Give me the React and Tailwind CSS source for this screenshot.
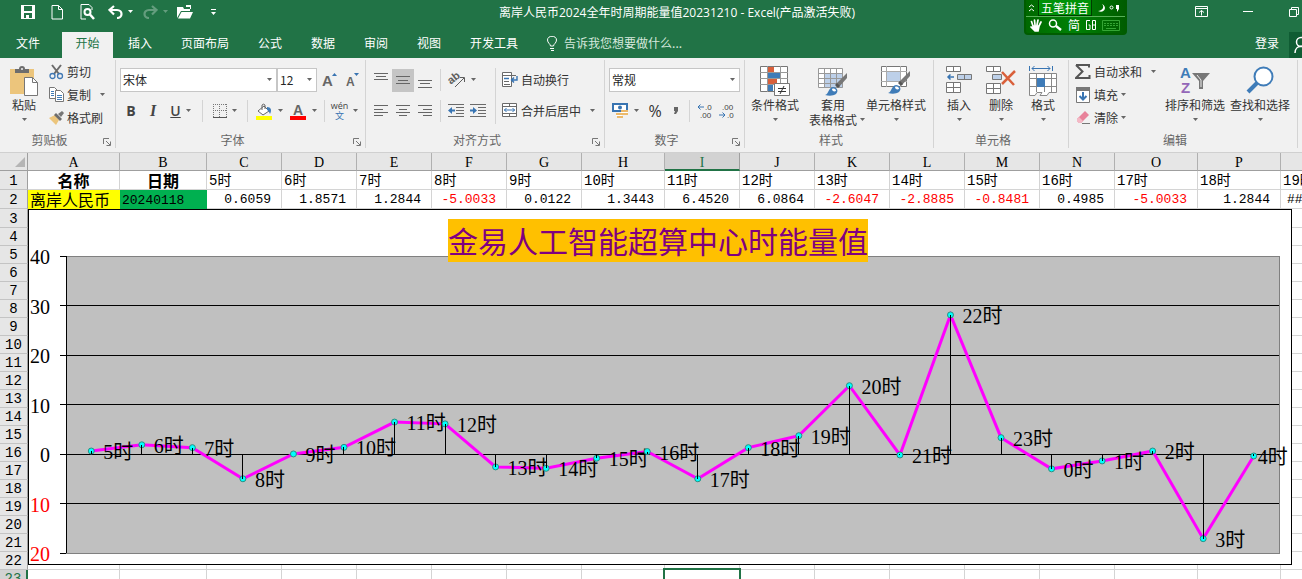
import { clsx } from "clsx";

const tabs = ["插入", "页面布局", "公式", "数据", "审阅", "视图", "开发工具"];

const columns = [
  ["A", 92], ["B", 87], ["C", 75], ["D", 75], ["E", 75], ["F", 75], ["G", 75], ["H", 83], ["I", 75],
  ["J", 75], ["K", 75], ["L", 75], ["M", 75], ["N", 75], ["O", 83], ["P", 83], ["", 75],
];

const hours = ["5时", "6时", "7时", "8时", "9时", "10时", "11时", "12时", "13时", "14时", "15时", "16时", "17时", "18时", "19时"];
const amounts = ["0.6059", "1.8571", "1.2844", "-5.0033", "0.0122", "1.3443", "6.4520", "6.0864", "-2.6047", "-2.8885", "-0.8481", "0.4985", "-5.0033", "1.2844"];

const series = [
  ["5时", 0.6059], ["6时", 1.8571], ["7时", 1.2844], ["8时", -5.0033], ["9时", 0.0122], ["10时", 1.3443],
  ["11时", 6.452], ["12时", 6.0864], ["13时", -2.6047], ["14时", -2.8885], ["15时", -0.8481], ["16时", 0.4985],
  ["17时", -5.0033], ["18时", 1.2844], ["19时", 3.7], ["20时", 13.8], ["21时", -0.2], ["22时", 28.1],
  ["23时", 3.3], ["0时", -3], ["1时", -1.4], ["2时", 0.6], ["3时", -17.1], ["4时", -0.4],
];

const emptyRows = Array.from({ length: 21 }, (_, i) => i + 3);

/* ---------- small pieces ---------- */

const Arrow = ({ className = "fill-[#666]" }) => (
  <svg width="7" height="4" viewBox="0 0 7 4" className={clsx("shrink-0", className)}><path d="M1 0h5L3.5 3z" /></svg>
);

const Sep = ({ className }) => <span className={clsx("w-px shrink-0 bg-[#d4d4d4]", className)} />;

const Launcher = () => (
  <button aria-label="更多选项" className="absolute right-1 bottom-0.5">
    <svg width="8" height="8" viewBox="0 0 8 8" fill="none" stroke="#777"><path d="M.5 6V.5H6M3 3l4 4M7.5 3.5v4h-4" /></svg>
  </button>
);

const Group = ({ title, width, launcher, children }) => (
  <section className={clsx("relative mt-0.5 mb-1 flex shrink-0 flex-col border-r border-[#d4d4d4]", width)}>
    <div className="h-[73px]">{children}</div>
    <h2 className="pr-4 text-center leading-4 text-[#666]">{title}</h2>
    {launcher && <Launcher />}
  </section>
);

const IconButton = ({ label, width, arrow, active, children }) => (
  <button aria-label={label} className={clsx("flex h-[23px] shrink-0 items-center justify-center gap-1", width, active && "bg-[#c5c5c5]")}>
    {children}
    {arrow && <Arrow />}
  </button>
);

const TextButton = ({ icon, label, arrow, gap = "gap-0.5" }) => (
  <button className="flex h-[23px] items-center gap-[3px] whitespace-nowrap">
    <span className="flex w-4 justify-center">{icon}</span>
    <span className={clsx("flex items-center", gap)}>{label}{arrow && <Arrow />}</span>
  </button>
);

const BigButton = ({ icon, label, second, width }) => (
  <button className={clsx("flex shrink-0 flex-col items-center whitespace-nowrap leading-[15px]", width)}>
    <span className="flex h-[37px] items-start pt-1.5">{icon}</span>
    <span>{label}</span>
    <span className="relative flex h-[15px] items-center">
      {second}
      {second ? <span className="absolute left-full pl-0.5"><Arrow /></span> : <Arrow />}
    </span>
  </button>
);

const Dropdown = ({ label, value, width }) => (
  <span className={clsx("relative flex shrink-0 items-center", width)}>
    <select aria-label={label} defaultValue={value} className="h-6 w-full appearance-none border border-[#c6c6c6] bg-white pl-0.5 text-[#262626]">
      <option>{value}</option>
    </select>
    <span className="pointer-events-none absolute right-1 flex"><Arrow /></span>
  </span>
);

const Lines = ({ d }) => (
  <svg width="14" height="16" viewBox="0 0 14 16" stroke="#666"><path d={d} /></svg>
);

/* ---------- ribbon icons ---------- */

const PasteIcon = () => (
  <svg width="28" height="30" viewBox="0 0 28 30">
    <path d="M0 3h24v25H0z" fill="#ecc57c" />
    <path d="M5 7V3h4a3 3 0 0 1 6 0h4v4z" fill="#6d6d6d" />
    <circle cx="12" cy="3" r="1" fill="#f1f1f1" />
    <path d="M14.5 11.5h8l5 5v13h-13z" fill="#fff" stroke="#777" />
    <path d="M22.500 11.500v5h5" fill="none" stroke="#777" />
  </svg>
);

const CutIcon = () => (
  <svg width="15" height="16" viewBox="0 0 15 16" fill="none">
    <path d="M3 1l7 9M12 1l-7 9" stroke="#6b6b6b" strokeWidth="2" />
    <circle cx="3.500" cy="12" r="2.500" stroke="#4078b4" strokeWidth="1.300" />
    <circle cx="11" cy="12" r="2.500" stroke="#4078b4" strokeWidth="1.300" />
  </svg>
);

const CopyIcon = () => (
  <svg width="15" height="15" viewBox="0 0 15 15" fill="#fff" stroke="#777">
    <path d="M.5.500h5l3 3v8h-8z" />
    <path d="M6.500 3.500h5l3 3v8h-8z" />
    <path d="M2 4.500h3M2 6.500h3M2 8.500h3M8 8.500h5M8 10.500h5M8 12.500h5" stroke="#3f7cb8" />
  </svg>
);

const PainterIcon = () => (
  <svg width="15" height="14" viewBox="0 0 15 14">
    <path d="M0 7l6-3 4 5-3 5z" fill="#ecc57c" />
    <path d="M5 4l2-2 6 6-2 2z" fill="#6d6d6d" />
    <path d="M9 3l4-3 2 2-3 4z" fill="#777" />
  </svg>
);

const FillIcon = () => (
  <svg width="17" height="17" viewBox="0 0 17 17">
    <path d="M2 8l6-5 5 5-6 4z" fill="#fff" stroke="#666" />
    <path d="M6 7V2a2 2 0 0 1 3 0v4" fill="none" stroke="#666" />
    <path d="M11 4c4 0 5 3 3 7-1-2-1-3-3-4z" fill="#3f7cb8" />
    <path d="M0 13h16v4H0z" fill="#ffff00" />
  </svg>
);

const BorderIcon = () => (
  <svg width="14" height="14" viewBox="0 0 14 14" stroke="#777">
    <path d="M.5 0v13M6.500 0v13M13.500 0v13M0 .5h14M0 6.500h14" strokeDasharray="1 1" />
    <path d="M0 13.500h14" stroke="#555" />
  </svg>
);

const AngleIcon = () => (
  <svg width="17" height="16" viewBox="0 0 17 16" className="overflow-visible">
    <text x="0" y="10" fontSize="11" fontWeight="700" fill="#5d5d5d" transform="rotate(-38 5 9)" fontFamily="Liberation Sans">ab</text>
    <path d="M6 15l9-9M11 5.500h4.500V10" fill="none" stroke="#5d5d5d" />
  </svg>
);

const IndentIcon = ({ right }) => (
  <svg width="16" height="14" viewBox="0 0 16 14">
    <path d="M0 .500h16M8 3.500h8M8 6.500h8M8 9.500h8M0 12.500h16" stroke="#6a6a6a" />
    <path d={right ? "M0 5.500h3V3l4 3.500L3 10V7.500H0z" : "M7 5.500H4V3L0 6.500 4 10V7.500h3z"} fill="#3874b2" />
  </svg>
);

const WrapIcon = () => (
  <svg width="16" height="16" viewBox="0 0 16 16" fill="none">
    <path d="M.500.500h9v14h-9z" fill="#fff" stroke="#6a6a6a" />
    <path d="M0 3.500h14M2 9.500h5M2 12.500h6" stroke="#6a6a6a" />
    <path d="M2 6.500h5M15 4v4h-5M12 5.500L9.500 8l2.500 2.500" stroke="#3874b2" strokeWidth="1.400" />
  </svg>
);

const MergeIcon = () => (
  <svg width="16" height="15" viewBox="0 0 16 15" fill="none">
    <path d="M.500.500h14v13h-14zM.5 3.500h14M.5 10.500h14M7.500.500v3M7.500 10.500v3" fill="#fff" stroke="#6a6a6a" />
    <path d="M2 7h11M4.500 5L2.500 7l2 2M10.500 5l2 2-2 2" stroke="#3874b2" />
  </svg>
);

const MoneyIcon = () => (
  <svg width="17" height="16" viewBox="0 0 17 16">
    <path d="M1 1h14v7H1z" fill="#fff" stroke="#3874b2" strokeWidth="2" />
    <circle cx="8" cy="4.500" r="2" fill="#3874b2" />
    <path d="M9 7h7v2H9zM10 10h6v2h-6zM4 10h6v2H4zM5 13h6v2H5z" fill="#ecb96a" />
    <path d="M9 9h7v1H9zM4 12h6v1H4z" fill="#fff" />
  </svg>
);

const DecimalIcon = ({ more }) => (
  <svg width="16" height="16" viewBox="0 0 16 16" fontSize="8" fontFamily="Liberation Sans" fill="#444">
    <text x={more ? 8 : 3} y="7">{more ? ".0" : ".00"}</text>
    <text x={more ? 3 : 8} y="15">{more ? ".00" : ".0"}</text>
    <path d={more ? "M7 4H1M3.500 1.500L1 4l2.500 2.500" : "M0 12h6M3.500 9.500L6 12l-2.500 2.500"} fill="none" stroke="#3874b2" />
  </svg>
);

const CondIcon = () => (
  <svg width="30" height="30" viewBox="0 0 30 30">
    <path d="M.500.500h27v25H.500z" fill="#fff" stroke="#777" />
    <path d="M8 1h6v5H8zM8 13h9v5H8z" fill="#d9603b" />
    <path d="M8 7h12v5H8zM8 19h5v6H8z" fill="#3f7cb8" />
    <path d="M0 6.500h28M0 12.500h28M0 18.500h28M7.500 0v26M20.500 0v26" stroke="#999" />
    <path d="M14.500 17.500h15v12h-15z" fill="#fff" stroke="#777" />
    <path d="M18 22.500h8M18 25.500h8M24 20l-4 8" stroke="#333" />
  </svg>
);

const BrushOver = () => (
  <>
    <path d="M29 5v5l-8 9-3-3z" fill="#777" />
    <path d="M19 15l3 3-2 2-3-3z" fill="#555" />
    <path d="M7 27c4-1 3-7 8-8 4 0 6 4 3 7-3 2-7 2-11 1z" fill="#3f7cb8" />
    <path d="M14 21c2-1 4 0 4 2-2 1-4 0-4-2z" fill="#fff" />
  </>
);

const TableStyleIcon = () => (
  <svg width="30" height="30" viewBox="0 -2 30 30">
    <path d="M.500.500h24v19H.500z" fill="#fff" />
    <path d="M7 5h18v15H7z" fill="#bdd0e9" />
    <path d="M.500.500h24v19H.500zM0 5.500h25M0 10.500h25M0 15.500h25M6.500 0v20M12.500 0v20M18.500 0v20" fill="none" stroke="#999" />
    <BrushOver />
  </svg>
);

const CellStyleIcon = () => (
  <svg width="30" height="29" viewBox="0 0 30 29">
    <path d="M.500.500h25v20H.500z" fill="#fff" stroke="#777" />
    <path d="M0 5.500h26M0 15.500h26M5.500 0v21M19.500 0v21" stroke="#aaa" />
    <path d="M6 6h13v9H6z" fill="#bdd0e9" />
    <BrushOver />
  </svg>
);

const InsertIcon = () => (
  <svg width="27" height="28" viewBox="0 0 27 28" fill="#fff" stroke="#777">
    <path d="M.500.500h14v5H.500zM7.500.500v5M.500 16.500h14v10H.500zM7.500 16.500v10M.5 21.500h14" />
    <path d="M11.500 8.500h14v5h-14zM18.500 8.500v5" fill="#bdd0e9" />
    <path d="M8 11H2M4.500 8.500L2 11l2.500 2.500" fill="none" stroke="#3874b2" strokeWidth="1.500" />
  </svg>
);

const DeleteIcon = () => (
  <svg width="30" height="28" viewBox="0 0 30 28" fill="#fff" stroke="#777">
    <path d="M.500.500h14v5H.500zM7.500.500v5M.500 17.500h14v10H.500zM7.500 17.500v10M.5 22.500h14" />
    <path d="M6.500 8.500h9v5h-9z" fill="#bdd0e9" />
    <path d="M16 6l12 13M29 5L16 18" fill="none" stroke="#d9603b" strokeWidth="2.500" />
  </svg>
);

const FormatIcon = () => (
  <svg width="28" height="31" viewBox="0 0 28 31" fill="#fff" stroke="#888">
    <path d="M.500 7.500h27v19H20l-2 3h-7l2-3H8l-2 3H.500zM7.500 7v19M15.500 7v19M22.500 7v19M.5 12.500h27M.5 20.500h27" />
    <path d="M8 12h8v9H8z" fill="#3f7cb8" stroke="none" />
    <path d="M.500 0v5M23.500 0v5M3 2.500h18M5.500 0L3 2.500 5.500 5M18.500 0L21 2.500 18.500 5" fill="none" stroke="#3874b2" />
  </svg>
);

const SigmaIcon = () => (
  <svg width="16" height="15" viewBox="0 0 16 15"><path d="M1 1h13v2.500M1 1l6.500 6.500L1 14h13.500v-3" fill="none" stroke="#555" strokeWidth="2" /></svg>
);

const DownIcon = () => (
  <svg width="14" height="16" viewBox="0 0 14 16">
    <path d="M.500.500h13v15H.500z" fill="#fff" stroke="#777" />
    <path d="M0 0h14v4H0z" fill="#777" />
    <path d="M7 5v7M3.500 9L7 12.500 10.500 9" fill="none" stroke="#3874b2" strokeWidth="2" />
  </svg>
);

const EraserIcon = () => (
  <svg width="15" height="14" viewBox="0 0 15 14">
    <path d="M1 8l8-8 4 4-8 8H3L1 10z" fill="#e8829a" />
    <path d="M3 6l4 4-2 2H3L1 10V8z" fill="#f4b9c6" />
    <path d="M6 12.500h8" stroke="#777" />
  </svg>
);

const SortIcon = () => (
  <svg width="30" height="29" viewBox="0 0 30 29" className="overflow-visible">
    <text x="0" y="12" fontSize="15" fontWeight="700" fill="#3f7cb8" fontFamily="Liberation Sans">A</text>
    <text x="1" y="27" fontSize="15" fontWeight="700" fill="#9467b8" fontFamily="Liberation Sans">Z</text>
    <path d="M12 7h18l-7 8v8h-4v-8z" fill="#777" />
    <path d="M17 9l4 5v7" fill="none" stroke="#eee" />
  </svg>
);

const FindIcon = () => (
  <svg width="28" height="28" viewBox="0 0 28 28" fill="none">
    <circle cx="17.500" cy="10.500" r="9" fill="#fff" stroke="#3f7cb8" strokeWidth="2" />
    <path d="M11 17l-9 9" stroke="#3f7cb8" strokeWidth="4" />
  </svg>
);

/* ---------- title bar ---------- */

const QuickAccess = () => (
  <div className="flex w-[499px] shrink-0 items-center pl-[21px] text-white">
    <button aria-label="保存" className="w-[30px]">
      <svg width="14" height="14" viewBox="0 0 14 14"><path d="M0 0h14v14H0z" fill="#fff" /><path d="M3 1h8v5H3zM3 8h8v5H8v-3H5v3H3z" fill="#217346" /></svg>
    </button>
    <button aria-label="新建" className="w-[29px]">
      <svg width="12" height="15" viewBox="0 0 12 15" fill="none" stroke="#fff"><path d="M1 .500h6.500l4 4v9.500H1zM7.500.500v4h4" /></svg>
    </button>
    <button aria-label="打印预览" className="w-7">
      <svg width="15" height="16" viewBox="0 0 15 16" fill="none" stroke="#fff"><path d="M6 15H1V.500h8l3 3V6" /><circle cx="7.500" cy="8" r="3" strokeWidth="2" /><path d="M10 10.500l4 4.500" strokeWidth="2.500" /></svg>
    </button>
    <button aria-label="撤消" className="flex w-[35px] items-center gap-1">
      <svg width="15" height="14" viewBox="0 0 15 14" fill="none" stroke="#fff" strokeWidth="2.200"><path d="M6 1L1.500 5 6 9.500M2 5h7c6 0 6 8 0 8" /></svg>
      <Arrow className="fill-white" />
    </button>
    <button aria-label="恢复" className="flex w-[34px] items-center gap-1 opacity-30">
      <svg width="15" height="14" viewBox="0 0 15 14" fill="none" stroke="#fff" strokeWidth="2.200"><path d="M9 1l4.500 4L9 9.500M13 5H6c-6 0-6 8 0 8" /></svg>
      <Arrow className="fill-white" />
    </button>
    <button aria-label="打开" className="w-[34px]">
      <svg width="16" height="14" viewBox="0 0 16 14" fill="#fff"><path d="M0 13V2h6l1 2h6v2H4zM4.500 7H16l-3 6.500H1zM9 0h5v4h-1V2H9z" /></svg>
    </button>
    <button aria-label="自定义快速访问工具栏">
      <svg width="5" height="8" viewBox="0 0 5 8" fill="#fff"><path d="M0 1h5v1H0zM0 4h5L2.500 7z" /></svg>
    </button>
  </div>
);

const ImeBar = () => (
  <div className="absolute top-0 right-[175px] flex h-[35px] w-[103px] flex-col rounded-b border-x-2 border-b-2 border-[#005c00] bg-linear-to-r from-[#006800] via-[#008206] to-[#005c00] text-white">
    <div className="flex h-[17px] items-center border-b border-[#58b058]">
      <svg width="12" height="10" viewBox="0 0 12 10" fill="none" stroke="#fff"><path d="M3 4l2.500-2L8 4M3 8l2.500-2L8 8" /></svg>
      <button className="h-4 w-[54px] border-x border-b border-[#003c00] bg-[#009208] leading-[14px]">五笔拼音</button>
      <svg width="30" height="12" viewBox="0 0 30 12" fill="#fff"><path d="M10 2c3 3 0 7-4 7 6 3 10-4 4-7z" /><circle cx="19.500" cy="5.500" r="1.500" fill="none" stroke="#fff" /><path d="M24 3h3v4l-2 3v-3h-1z" /></svg>
    </div>
    <div className="flex flex-1 items-center gap-1.5 pl-1">
      <svg width="12" height="13" viewBox="0 0 12 13" stroke="#fff" strokeWidth="1.700" fill="#fff" strokeLinecap="round"><path d="M3 7L1.500 2.500M5 6L4.500 1M7 6l1-5M9 7l2-4M3 7h6l-1 5H5L1 8" /></svg>
      <svg width="14" height="12" viewBox="0 0 14 12" fill="none" stroke="#fff"><circle cx="5" cy="4.500" r="3.500" strokeWidth="1.500" /><path d="M8 7l5 4" strokeWidth="2.500" /></svg>
      <span className="leading-4">简</span>
      <svg width="10" height="12" viewBox="0 0 10 12" fill="none" stroke="#fff"><path d="M4 1.500H.5v9H4V6H2.500M6.500 1.500h3v9h-3zM6.500 6h3" /></svg>
      <svg width="18" height="11" viewBox="0 0 18 11" stroke="#35a535" fill="none"><path d="M.500.500h17v10H.500z" /><path d="M2 3.500h14M2 5.500h14" strokeDasharray="2 1" /><path d="M4 8.500h10" /></svg>
    </div>
  </div>
);

const TitleBar = () => (
  <header className="relative bg-[#217346] text-white">
    <div className="flex h-8 items-start">
      <div className="flex h-6 flex-1 items-center">
        <QuickAccess />
        <h1 className="pt-0.5 font-['Open_Sans','Noto_Sans_CJK_SC',sans-serif] whitespace-nowrap">离岸人民币2024全年时周期能量值20231210 - Excel(产品激活失败)</h1>
      </div>
      <div className="flex h-6 items-center">
        <button aria-label="功能区显示选项" className="w-12"><svg width="13" height="12" viewBox="0 0 13 12" fill="none" stroke="#fff"><path d="M.500.500h12v10H.500zM.500 2.500h12M6.500 9.500v-5M4 6.500l2.500-2L9 6.500" /></svg></button>
        <button aria-label="最小化" className="w-[46px]"><svg width="11" height="2"><path d="M0 0h10v1H0z" fill="#fff" /></svg></button>
        <button aria-label="还原" className="w-[13px]"><svg width="10" height="10" viewBox="0 0 10 10" fill="none" stroke="#fff"><path d="M.500 2.500h7v7h-7zM2.500 2.500v-2h7v7h-2" /></svg></button>
      </div>
    </div>
    <nav className="flex h-[26px] leading-[22px]">
      <button className="w-[62px] pr-1.5 pb-1">文件</button>
      <button className="w-[51px] bg-[#f1f1f1] pb-1 text-[#217346]">开始</button>
      <div className="flex gap-[29px] pb-1 pl-[15px]">
        {tabs.map((tab) => <button key={tab}>{tab}</button>)}
        <label className="flex items-center gap-1.5 text-[#d6e8dd]">
          <svg width="11" height="15" viewBox="0 0 11 15" fill="none" stroke="#fff"><path d="M3.500 10c0-2-3-3-3-6 0-5 9-5 9 0 0 3-3 4-3 6zM3 12.500h4M4 14.500h3" /></svg>
          <input placeholder="告诉我您想要做什么..." className="w-36 outline-none placeholder:text-[#d6e8dd]" />
        </label>
      </div>
      <button className="ml-auto w-11 pb-1">登录</button>
      <button aria-label="共享" className="w-[13px] overflow-hidden bg-[#0f5c33]">
        <svg width="20" height="18" viewBox="0 0 20 18" fill="none" stroke="#fff" strokeWidth="1.500"><circle cx="12" cy="6" r="4.500" /><path d="M6 17c0-9 12-9 12 0" /></svg>
      </button>
    </nav>
    <ImeBar />
  </header>
);

/* ---------- ribbon ---------- */

const Ribbon = () => (
  <div className="flex h-[95px] overflow-hidden border-b border-[#d0d0d0] bg-[#f1f1f1] text-[#333]">
    <Group title="剪贴板" width="w-[116px]" launcher>
      <div className="flex">
        <BigButton icon={<PasteIcon />} label="粘贴" width="w-12" />
        <div className="flex flex-col">
          <TextButton icon={<CutIcon />} label="剪切" />
          <TextButton icon={<CopyIcon />} label="复制" arrow gap="gap-2" />
          <TextButton icon={<PainterIcon />} label="格式刷" />
        </div>
      </div>
    </Group>

    <Group title="字体" width="w-[250px]" launcher>
      <div className="flex flex-col gap-[7px] pt-2 pl-1">
        <div className="flex h-6 items-center">
          <Dropdown label="字体" value="宋体" width="w-[157px]" />
          <Dropdown label="字号" value="12" width="w-10" />
          <IconButton label="增大字号" width="w-[26px]">
            <svg width="16" height="16" viewBox="0 0 16 16"><text x="0" y="14" fontSize="15" fontFamily="Liberation Sans" fontWeight="700" fill="#666">A</text><path d="M10 4h5l-2.500-3z" fill="#3874b2" /></svg>
          </IconButton>
          <IconButton label="减小字号" width="w-5">
            <svg width="14" height="16" viewBox="0 0 14 16"><text x="0" y="14" fontSize="12" fontFamily="Liberation Sans" fontWeight="700" fill="#666">A</text><path d="M8 1h5l-2.500 3z" fill="#3874b2" /></svg>
          </IconButton>
        </div>
        <div className="flex h-6 items-center font-['Open_Sans',sans-serif] text-sm text-[#444]">
          <IconButton label="加粗" width="w-[22px]"><b>B</b></IconButton>
          <IconButton label="倾斜" width="w-[22px]"><i className="font-['Liberation_Serif',serif] text-base font-bold">I</i></IconButton>
          <IconButton label="下划线" width="w-[34px]" arrow><u className="font-semibold">U</u></IconButton>
          <Sep className="mx-1 h-[22px]" />
          <IconButton label="边框" width="w-9" arrow><BorderIcon /></IconButton>
          <Sep className="mx-1 h-[22px]" />
          <IconButton label="填充颜色" width="w-9" arrow><FillIcon /></IconButton>
          <IconButton label="字体颜色" width="w-8" arrow>
            <svg width="17" height="17" viewBox="0 0 17 17"><text x="3" y="12" fontSize="14" fontWeight="700" fill="#666" fontFamily="Liberation Sans">A</text><path d="M0 13h16v4H0z" fill="#f00" /></svg>
          </IconButton>
          <Sep className="ml-1 h-[22px]" />
          <IconButton label="拼音" width="w-10" arrow>
            <span className="flex flex-col items-center text-[9px] leading-[10px]"><span>wén</span><span className="font-['Noto_Sans_CJK_SC',sans-serif] text-[#3874b2]">文</span></span>
          </IconButton>
        </div>
      </div>
    </Group>

    <Group title="对齐方式" width="w-[239px]" launcher>
      <div className="flex gap-1.5 pt-2 pl-1">
        <div className="flex flex-col gap-[7px]">
          <div className="flex h-6 items-center">
            <IconButton label="顶端对齐" width="w-[22px]"><Lines d="M0 1.500h14M2 4.500h10M0 7.500h14" /></IconButton>
            <IconButton label="垂直居中" width="w-[22px]" active><Lines d="M0 4.500h14M2 8.500h10M0 11.500h14" /></IconButton>
            <IconButton label="底端对齐" width="w-[22px]"><Lines d="M0 8.500h14M2 11.500h10M0 15.500h14" /></IconButton>
            <Sep className="mx-1 h-[22px]" />
            <IconButton label="方向" width="w-9" arrow><AngleIcon /></IconButton>
          </div>
          <div className="flex h-6 items-center">
            <IconButton label="左对齐" width="w-[22px]"><Lines d="M0 2.500h14M0 6.500h9M0 9.500h14M0 12.500h9" /></IconButton>
            <IconButton label="居中" width="w-[22px]"><Lines d="M0 2.500h14M3 6.500h8M0 9.500h14M3 12.500h8" /></IconButton>
            <IconButton label="右对齐" width="w-[22px]"><Lines d="M0 2.500h14M5 6.500h9M0 9.500h14M5 12.500h9" /></IconButton>
            <Sep className="mx-1 h-[22px]" />
            <IconButton label="减少缩进量" width="w-[22px]"><IndentIcon /></IconButton>
            <IconButton label="增加缩进量" width="w-[22px]"><IndentIcon right /></IconButton>
          </div>
        </div>
        <Sep className="h-14" />
        <div className="flex flex-col gap-2">
          <TextButton icon={<WrapIcon />} label="自动换行" />
          <TextButton icon={<MergeIcon />} label="合并后居中" arrow gap="gap-2" />
        </div>
      </div>
    </Group>

    <Group title="数字" width="w-[140px]" launcher>
      <div className="flex flex-col gap-[7px] pt-2 pl-1">
        <Dropdown label="数字格式" value="常规" width="w-[131px]" />
        <div className="flex h-6 items-center">
          <IconButton label="会计数字格式" width="w-[34px]" arrow><MoneyIcon /></IconButton>
          <IconButton label="百分比样式" width="w-6"><span className="font-['Open_Sans',sans-serif] text-base">%</span></IconButton>
          <IconButton label="千位分隔样式" width="w-[18px]">
            <svg width="6" height="10" viewBox="0 0 6 10" fill="#666"><path d="M1 1h4v4L3 8H1l1-3H1z" /></svg>
          </IconButton>
          <Sep className="mx-1 h-[22px]" />
          <IconButton label="增加小数位数" width="w-[22px]"><DecimalIcon more /></IconButton>
          <IconButton label="减少小数位数" width="w-[22px]"><DecimalIcon /></IconButton>
        </div>
      </div>
    </Group>

    <Group title="样式" width="w-[189px]">
      <div className="flex">
        <BigButton icon={<CondIcon />} label="条件格式" width="w-[60px]" />
        <BigButton icon={<TableStyleIcon />} label="套用" second="表格格式" width="w-14" />
        <BigButton icon={<CellStyleIcon />} label="单元格样式" width="w-[70px]" />
      </div>
    </Group>

    <Group title="单元格" width="w-[135px]">
      <div className="flex pl-1">
        <BigButton icon={<InsertIcon />} label="插入" width="w-[42px]" />
        <BigButton icon={<DeleteIcon />} label="删除" width="w-[42px]" />
        <BigButton icon={<FormatIcon />} label="格式" width="w-[42px]" />
      </div>
    </Group>

    <Group title="编辑" width="w-[229px]">
      <div className="flex pl-1.5">
        <div className="flex w-[88px] flex-col">
          <TextButton icon={<SigmaIcon />} label="自动求和" arrow gap="gap-2" />
          <TextButton icon={<DownIcon />} label="填充" arrow />
          <TextButton icon={<EraserIcon />} label="清除" arrow />
        </div>
        <BigButton icon={<SortIcon />} label="排序和筛选" width="w-16" />
        <BigButton icon={<FindIcon />} label="查找和选择" width="w-[66px]" />
      </div>
    </Group>
  </div>
);

/* ---------- chart ---------- */

const LEFT = 38;
const RIGHT = 1251;
const TOP = 47;
const BOTTOM = 344;
const yOf = (v) => TOP + ((40 - v) * (BOTTOM - TOP)) / 60;
const xOf = (i) => LEFT + ((i + 0.5) * (RIGHT - LEFT)) / series.length;

const Chart = () => (
  <figure className="absolute top-14 left-7 h-[356px] w-[1264px] border border-black bg-white">
    <svg width="1262" height="354" viewBox="1 1 1262 354" className="font-['Liberation_Serif','Noto_Sans_CJK_SC',serif] text-xl">
      <rect x={LEFT} y={TOP} width={RIGHT - LEFT} height={BOTTOM - TOP} fill="#c0c0c0" stroke="#808080" shapeRendering="crispEdges" />
      <g stroke="#000" shapeRendering="crispEdges">
        {[30, 20, 10, 0, -10].map((v) => <line key={v} x1={LEFT} x2={RIGHT} y1={yOf(v)} y2={yOf(v)} />)}
        {[40, 30, 20, 10, 0, -10, -20].map((v) => <line key={v} x1={LEFT - 6} x2={LEFT} y1={yOf(v)} y2={yOf(v)} />)}
        <line x1={LEFT} x2={LEFT} y1={TOP} y2={BOTTOM} />
      </g>
      {[40, 30, 20, 10, 0, -10, -20].map((v) => (
        <text key={v} x="22" y={yOf(v) + 8} textAnchor="end" fill={v < 0 ? "#f00" : "#000"}>{Math.abs(v)}</text>
      ))}
      <polyline points={series.map(([, v], i) => `${xOf(i)},${yOf(v)}`).join(" ")} fill="none" stroke="#f0f" strokeWidth="3" />
      {series.map(([name, v], i) => (
        <g key={name}>
          <circle cx={xOf(i)} cy={yOf(v)} r="3" fill="#0ff" stroke="#2a8f80" />
          <line x1={xOf(i)} x2={xOf(i)} y1={yOf(v)} y2={yOf(0)} stroke="#000" shapeRendering="crispEdges" />
          <text x={xOf(i) + (i === series.length - 1 ? 4 : 12)} y={yOf(v) + 8}>{name}</text>
        </g>
      ))}
    </svg>
    <figcaption className="absolute inset-x-0 top-[9px] flex justify-center pr-1">
      <span className="block h-[43px] bg-[#ffc000] font-['Noto_Sans_CJK_SC',sans-serif] text-3xl leading-[43px] text-[#800080]">金易人工智能超算中心时能量值</span>
    </figcaption>
  </figure>
);

/* ---------- sheet ---------- */

const cell = "overflow-hidden border-r border-b border-[#d4d4d4] p-0 whitespace-nowrap";
const headCell = "border-b border-b-[#c4c4c4] p-0 pt-0.5 text-center leading-[15px] font-normal";
const rowHead = "border-r border-r-[#9f9f9f] bg-[#e6e6e6]";

const Sheet = () => (
  <main className="relative flex-1 overflow-hidden bg-white font-['Liberation_Mono','Noto_Sans_CJK_SC',monospace] text-sm leading-4 text-black">
    <table className="w-[1356px] table-fixed border-separate border-spacing-0">
      <colgroup>
        <col className="w-7" />
        {columns.map(([name, width]) => <col key={name} style={{ width }} />)}
      </colgroup>
      <thead>
        <tr className="h-[18px]">
          <th className="border-r border-b border-[#9f9f9f] bg-[#e6e6e6] p-0">
            <svg width="10" height="10" className="mr-0.5 ml-auto"><path d="M10 0v10H0z" fill="#b5b5b5" /></svg>
          </th>
          {columns.map(([name]) => (
            <th key={name} scope="col" className={clsx("border-r p-0 align-top font-normal", name === "I" ? "border-b-2 border-r-[#9f9f9f] border-b-[#217346] bg-[#d2d2d2] text-[#217346]" : "border-b border-r-[#b0b0b0] border-b-[#9f9f9f] bg-[#e6e6e6]")}>
              <span className="block h-4 font-['Liberation_Serif',serif] leading-5">{name}</span>
            </th>
          ))}
        </tr>
      </thead>
      <tbody>
        <tr className="h-[19px]">
          <th scope="row" className={clsx(headCell, rowHead)}>1</th>
          <td className={clsx(cell, "text-center align-top font-['Noto_Sans_CJK_SC',sans-serif] text-base leading-[18px] font-bold")}>名称</td>
          <td className={clsx(cell, "text-center align-top font-['Noto_Sans_CJK_SC',sans-serif] text-base leading-[18px] font-bold")}>日期</td>
          {hours.map((hour) => <td key={hour} className={clsx(cell, "pt-0.5 pl-0.5")}>{hour}</td>)}
        </tr>
        <tr className="h-[19px]">
          <th scope="row" className={clsx(headCell, rowHead)}>2</th>
          <td className="overflow-hidden bg-[#ffff00] p-0 pl-0.5 align-top font-['Noto_Sans_CJK_SC',sans-serif] text-base leading-[18px] whitespace-nowrap">离岸人民币</td>
          <td className="bg-[#00b050] p-0 pt-0.5 pl-0.5 text-[13px]">20240118</td>
          {amounts.map((amount, i) => (
            <td key={i} className={clsx(cell, "pt-0.5 pr-2.5 text-right text-[13px]", amount.startsWith("-") && "text-[#ff0000]")}>{amount}</td>
          ))}
          <td className={clsx(cell, "pt-0.5 pl-1.5 text-[13px]")}>#######</td>
        </tr>
        {emptyRows.map((row) => (
          <tr key={row} className={row === 3 ? "h-[19px]" : "h-[18px]"}>
            <th scope="row" className={clsx(headCell, row === 23 ? "border-r-2 border-r-[#217346] bg-[#d2d2d2] text-[#217346]" : rowHead)}>{row}</th>
            {columns.map(([name]) => (
              <td key={name} className="relative border-r border-b border-[#d4d4d4] p-0">
                {row === 23 && name === "I" && <span className="absolute -inset-0.5 border-2 border-[#217346]" />}
              </td>
            ))}
          </tr>
        ))}
      </tbody>
    </table>
    <Chart />
  </main>
);

export default function App() {
  return (
    <div className="flex h-screen flex-col overflow-hidden font-['Noto_Sans_CJK_SC',sans-serif] text-xs">
      <TitleBar />
      <Ribbon />
      <Sheet />
    </div>
  );
}
